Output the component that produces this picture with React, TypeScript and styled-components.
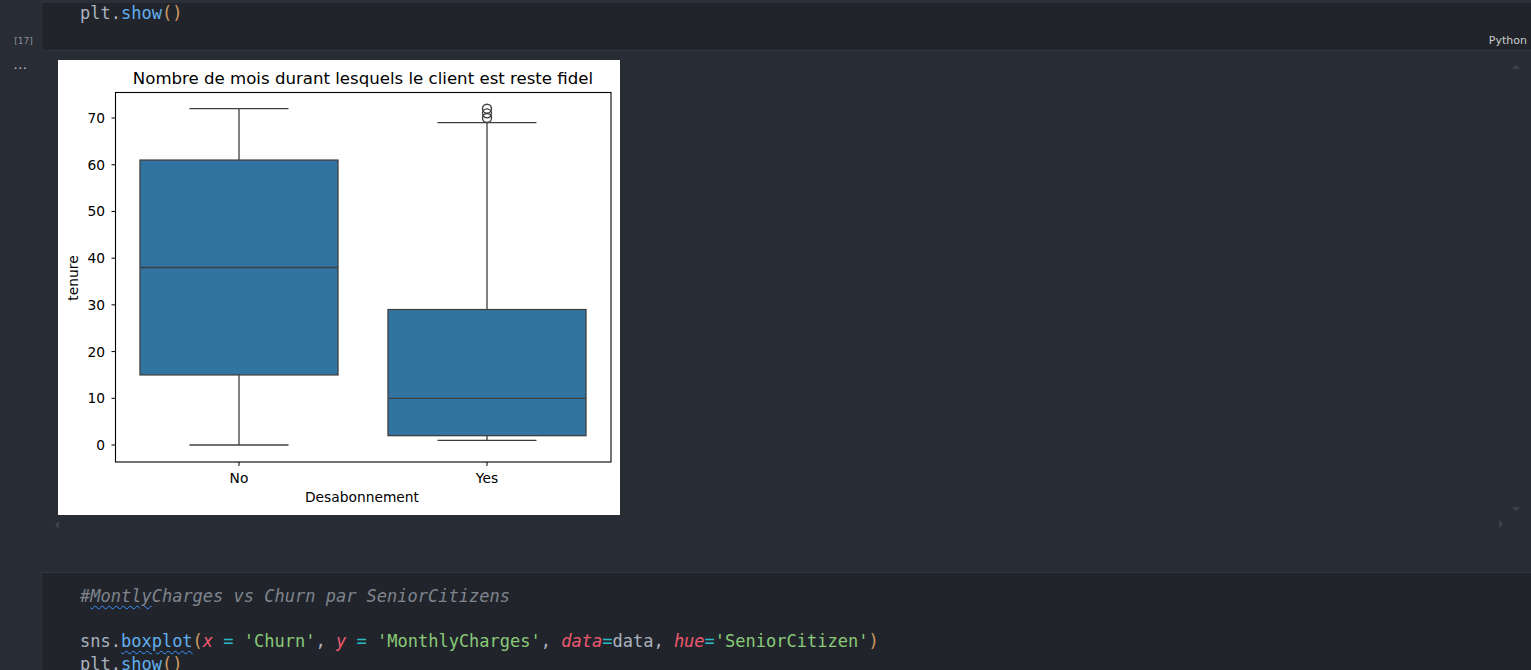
import React from "react";
import styled, { createGlobalStyle } from "styled-components";

const GlobalStyle = createGlobalStyle`
  html, body { margin: 0; padding: 0; background: #282c34; overflow: hidden; }
  * { box-sizing: border-box; }
`;

const Page = styled.div`
  width: 1531px;
  height: 670px;
  display: flex;
  flex-direction: column;
  background: #282c34;
  overflow: hidden;
`;

const TopCell = styled.div`
  display: flex;
  height: 51px;
  flex-shrink: 0;
`;

const Gutter = styled.div<{ $align: "start" | "end" }>`
  width: 41px;
  flex-shrink: 0;
  display: flex;
  flex-direction: column;
  align-items: center;
  justify-content: ${(p) => (p.$align === "end" ? "flex-end" : "flex-start")};
  padding: ${(p) => (p.$align === "end" ? "0 0 5px 6px" : "6px 0 0 0")};
`;

const ExecCount = styled.span`
  font-family: "DejaVu Sans", sans-serif;
  font-size: 9px;
  color: #8a8f98;
`;

const Ellipsis = styled.span`
  font-family: "DejaVu Sans", sans-serif;
  font-size: 13px;
  letter-spacing: 0.5px;
  color: #c8c8c8;
`;

const CodeBox = styled.div`
  flex: 1;
  display: flex;
  flex-direction: column;
  background: #21252b;
  border-top: 3px solid #2b2f37;
  border-left: 1px solid #30343c;
  border-bottom: 1px solid #30343c;
  padding-left: 38px;
`;

const CodeLines = styled.div<{ $top: number }>`
  margin-top: ${(p) => p.$top}px;
  font-family: "DejaVu Sans Mono", monospace;
  font-size: 17px;
  line-height: 22.5px;
  color: #abb2bf;
  white-space: pre;
`;

const Line = styled.div`
  height: 22.5px;
`;

const LangLabel = styled.div`
  margin-top: auto;
  align-self: flex-end;
  padding: 0 4px 3px 0;
  font-family: "DejaVu Sans", sans-serif;
  font-size: 11px;
  color: #cccccc;
`;

const Tok = styled.span<{ $c: string; $italic?: boolean; $squiggle?: boolean }>`
  color: ${(p) => p.$c};
  font-style: ${(p) => (p.$italic ? "italic" : "normal")};
  text-decoration: ${(p) => (p.$squiggle ? "underline wavy #3794ff" : "none")};
  text-decoration-thickness: 1px;
  text-underline-offset: 3px;
`;

const Output = styled.div`
  display: flex;
  height: 521px;
  flex-shrink: 0;
`;

const OutputBody = styled.div`
  flex: 1;
  position: relative;
  padding: 9px 0 0 17px;
`;

const ChartFrame = styled.svg`
  display: block;
  background: #ffffff;
`;

const Arrow = styled.div<{ $dir: "up" | "down" | "left" | "right"; $x: number; $y: number }>`
  position: absolute;
  left: ${(p) => p.$x}px;
  top: ${(p) => p.$y}px;
  width: 0;
  height: 0;
  ${(p) =>
    p.$dir === "up"
      ? "border-left: 4px solid transparent; border-right: 4px solid transparent; border-bottom: 4px solid #3d424e;"
      : p.$dir === "down"
      ? "border-left: 4px solid transparent; border-right: 4px solid transparent; border-top: 4px solid #3d424e;"
      : p.$dir === "left"
      ? "border-top: 4px solid transparent; border-bottom: 4px solid transparent; border-right: 4px solid #3d424e;"
      : "border-top: 4px solid transparent; border-bottom: 4px solid transparent; border-left: 4px solid #3d424e;"}
`;

const BottomCell = styled.div`
  flex: 1;
  margin-left: 41px;
  background: #21252b;
  border-top: 1px solid #32363e;
  border-left: 1px solid #30343c;
  padding: 12px 0 0 38px;
`;

const C = {
  text: "#abb2bf",
  fn: "#61afef",
  paren: "#d19a66",
  comment: "#7f848e",
  param: "#ef596f",
  op: "#2bbac5",
  str: "#89ca78",
};

const yv = (v: number) => 445 - v * 4.671;

const Box: React.FC<{ cx: number; q1: number; q3: number; med: number; lo: number; hi: number }> = ({
  cx,
  q1,
  q3,
  med,
  lo,
  hi,
}) => {
  const half = 99;
  const cap = 49.5;
  const stroke = "#3f3f3f";
  return (
    <g stroke={stroke} strokeWidth={1.3}>
      <line x1={cx} x2={cx} y1={yv(q3)} y2={yv(hi)} />
      <line x1={cx} x2={cx} y1={yv(q1)} y2={yv(lo)} />
      <line x1={cx - cap} x2={cx + cap} y1={yv(hi)} y2={yv(hi)} />
      <line x1={cx - cap} x2={cx + cap} y1={yv(lo)} y2={yv(lo)} />
      <rect x={cx - half} y={yv(q3)} width={half * 2} height={yv(q1) - yv(q3)} fill="#3274a1" />
      <line x1={cx - half} x2={cx + half} y1={yv(med)} y2={yv(med)} />
    </g>
  );
};

const Chart: React.FC = () => {
  const ticks = [0, 10, 20, 30, 40, 50, 60, 70];
  const font = "DejaVu Sans, sans-serif";
  const fs = 13.8;
  return (
    <ChartFrame width={562} height={455} viewBox="58 60 562 455">
      <rect x={58} y={60} width={562} height={455} fill="#fff" />
      <text x={363} y={84} fontFamily={font} fontSize={16.6} textAnchor="middle" fill="#000">
        Nombre de mois durant lesquels le client est reste fidel
      </text>
      <Box cx={239} q1={15} q3={61} med={38} lo={0} hi={72} />
      <Box cx={487} q1={2} q3={29} med={10} lo={1} hi={69} />
      {[70, 71, 72].map((v) => (
        <circle key={v} cx={487} cy={yv(v)} r={4.5} fill="none" stroke="#3f3f3f" strokeWidth={1.4} />
      ))}
      <rect x={115.5} y={92.5} width={495.5} height={369.5} fill="none" stroke="#000" strokeWidth={1.1} />
      {ticks.map((t) => (
        <g key={t}>
          <line x1={111.5} x2={115.5} y1={yv(t)} y2={yv(t)} stroke="#000" strokeWidth={1} />
          <text x={105} y={yv(t) + 5} fontFamily={font} fontSize={fs} textAnchor="end" fill="#000">
            {t}
          </text>
        </g>
      ))}
      {[
        { x: 239, l: "No" },
        { x: 487, l: "Yes" },
      ].map((t) => (
        <g key={t.l}>
          <line x1={t.x} x2={t.x} y1={462} y2={466} stroke="#000" strokeWidth={1} />
          <text x={t.x} y={483} fontFamily={font} fontSize={fs} textAnchor="middle" fill="#000">
            {t.l}
          </text>
        </g>
      ))}
      <text x={362} y={502} fontFamily={font} fontSize={fs} textAnchor="middle" fill="#000">
        Desabonnement
      </text>
      <text
        x={78}
        y={278}
        fontFamily={font}
        fontSize={fs}
        textAnchor="middle"
        fill="#000"
        transform="rotate(-90 78 278)"
      >
        tenure
      </text>
    </ChartFrame>
  );
};

export default function App() {
  return (
    <>
      <GlobalStyle />
      <Page>
        <TopCell>
          <Gutter $align="end">
            <ExecCount>[17]</ExecCount>
          </Gutter>
          <CodeBox>
            <CodeLines $top={-1}>
              <Line>
                <Tok $c={C.text}>plt.</Tok>
                <Tok $c={C.fn}>show</Tok>
                <Tok $c={C.paren}>()</Tok>
              </Line>
            </CodeLines>
            <LangLabel>Python</LangLabel>
          </CodeBox>
        </TopCell>
        <Output>
          <Gutter $align="start">
            <Ellipsis>...</Ellipsis>
          </Gutter>
          <OutputBody>
            <Chart />
            <Arrow $dir="up" $x={1471} $y={14} />
            <Arrow $dir="down" $x={1471} $y={456} />
            <Arrow $dir="left" $x={14} $y={470} />
            <Arrow $dir="right" $x={1458} $y={469} />
          </OutputBody>
        </Output>
        <BottomCell>
          <CodeLines $top={0}>
            <Line>
              <Tok $c={C.comment} $italic>
                #
              </Tok>
              <Tok $c={C.comment} $italic $squiggle>
                Montly
              </Tok>
              <Tok $c={C.comment} $italic>
                Charges vs Churn par SeniorCitizens
              </Tok>
            </Line>
            <Line />
            <Line>
              <Tok $c={C.text}>sns.</Tok>
              <Tok $c={C.fn} $squiggle>
                boxplot
              </Tok>
              <Tok $c={C.paren}>(</Tok>
              <Tok $c={C.param} $italic>
                x
              </Tok>
              <Tok $c={C.text}> </Tok>
              <Tok $c={C.op}>=</Tok>
              <Tok $c={C.text}> </Tok>
              <Tok $c={C.str}>'Churn'</Tok>
              <Tok $c={C.text}>, </Tok>
              <Tok $c={C.param} $italic>
                y
              </Tok>
              <Tok $c={C.text}> </Tok>
              <Tok $c={C.op}>=</Tok>
              <Tok $c={C.text}> </Tok>
              <Tok $c={C.str}>'MonthlyCharges'</Tok>
              <Tok $c={C.text}>, </Tok>
              <Tok $c={C.param} $italic>
                data
              </Tok>
              <Tok $c={C.op}>=</Tok>
              <Tok $c={C.text}>data, </Tok>
              <Tok $c={C.param} $italic>
                hue
              </Tok>
              <Tok $c={C.op}>=</Tok>
              <Tok $c={C.str}>'SeniorCitizen'</Tok>
              <Tok $c={C.paren}>)</Tok>
            </Line>
            <Line>
              <Tok $c={C.text}>plt.</Tok>
              <Tok $c={C.fn}>show</Tok>
              <Tok $c={C.paren}>()</Tok>
            </Line>
          </CodeLines>
        </BottomCell>
      </Page>
    </>
  );
}
